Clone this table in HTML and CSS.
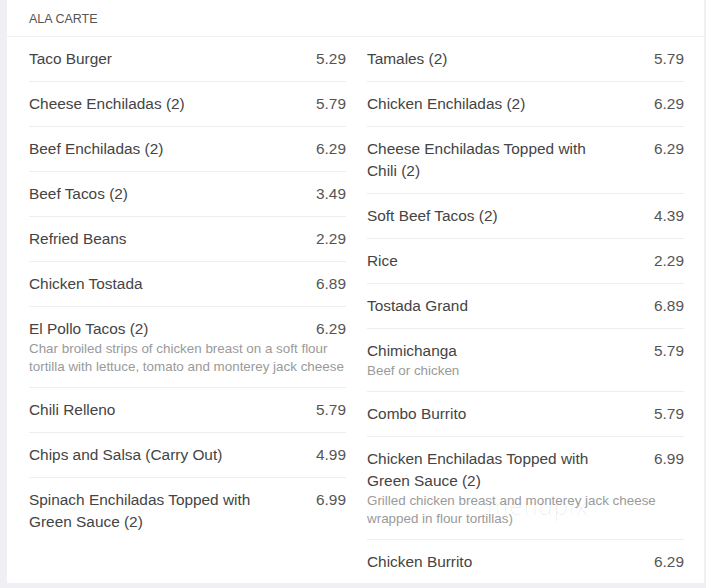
FILE: index.html
```html
<!DOCTYPE html>
<html>
<head>
<meta charset="utf-8">
<link rel="stylesheet" href="styles.css">
</head>
<body>
<div class="card">
  <div class="head">ALA CARTE</div>
  <div class="cols">
    <div class="col">
      <div class="item"><div class="row"><span class="name">Taco Burger</span><span class="price">5.29</span></div></div>
      <div class="item"><div class="row"><span class="name">Cheese Enchiladas (2)</span><span class="price">5.79</span></div></div>
      <div class="item"><div class="row"><span class="name">Beef Enchiladas (2)</span><span class="price">6.29</span></div></div>
      <div class="item"><div class="row"><span class="name">Beef Tacos (2)</span><span class="price">3.49</span></div></div>
      <div class="item"><div class="row"><span class="name">Refried Beans</span><span class="price">2.29</span></div></div>
      <div class="item"><div class="row"><span class="name">Chicken Tostada</span><span class="price">6.89</span></div></div>
      <div class="item"><div class="row"><span class="name">El Pollo Tacos (2)</span><span class="price">6.29</span></div><p class="desc">Char broiled strips of chicken breast on a soft flour tortilla with lettuce, tomato and monterey jack cheese</p></div>
      <div class="item"><div class="row"><span class="name">Chili Relleno</span><span class="price">5.79</span></div></div>
      <div class="item"><div class="row"><span class="name">Chips and Salsa (Carry Out)</span><span class="price">4.99</span></div></div>
      <div class="item last"><div class="row"><span class="name">Spinach Enchiladas Topped with Green Sauce (2)</span><span class="price">6.99</span></div></div>
    </div>
    <div class="col">
      <div class="item"><div class="row"><span class="name">Tamales (2)</span><span class="price">5.79</span></div></div>
      <div class="item"><div class="row"><span class="name">Chicken Enchiladas (2)</span><span class="price">6.29</span></div></div>
      <div class="item"><div class="row"><span class="name">Cheese Enchiladas Topped with Chili (2)</span><span class="price">6.29</span></div></div>
      <div class="item"><div class="row"><span class="name">Soft Beef Tacos (2)</span><span class="price">4.39</span></div></div>
      <div class="item"><div class="row"><span class="name">Rice</span><span class="price">2.29</span></div></div>
      <div class="item"><div class="row"><span class="name">Tostada Grand</span><span class="price">6.89</span></div></div>
      <div class="item"><div class="row"><span class="name">Chimichanga</span><span class="price">5.79</span></div><p class="desc">Beef or chicken</p></div>
      <div class="item"><div class="row"><span class="name">Combo Burrito</span><span class="price">5.79</span></div></div>
      <div class="item wm-host"><div class="row"><span class="name">Chicken Enchiladas Topped with Green Sauce (2)</span><span class="price">6.99</span></div><p class="desc">Grilled chicken breast and monterey jack cheese wrapped in flour tortillas)</p><span class="watermark">menupix</span></div>
      <div class="item last"><div class="row"><span class="name">Chicken Burrito</span><span class="price">6.29</span></div></div>
    </div>
  </div>
</div>
</body>
</html>
```
FILE: styles.css
```css
html, body {
  margin: 0;
  padding: 0;
  background: #efeff4;
}
body {
  width: 706px;
  height: 588px;
  overflow: hidden;
  font-family: "Liberation Sans", Arial, sans-serif;
}
.card {
  margin-left: 7px;
  width: 697px;
  height: 583px;
  background: #fff;
  box-sizing: border-box;
}
.head {
  height: 37px;
  box-sizing: border-box;
  padding: 12px 0 0 22px;
  font-size: 12.5px;
  line-height: 14px;
  color: #555;
  border-bottom: 1px solid #f0f0f3;
}
.cols {
  display: grid;
  grid-template-columns: 317px 317px;
  column-gap: 21px;
  padding: 0 20px 0 22px;
}
.item {
  padding: 11px 0;
  border-bottom: 1px solid #eeeef1;
}
.item.last {
  border-bottom: none;
}
.row {
  display: flex;
  justify-content: space-between;
  align-items: flex-start;
  font-size: 15.4px;
  line-height: 22px;
  color: #444;
}
.name {
  width: 75%;
}
.price {
  color: #555;
}
.desc {
  margin: 0;
  font-size: 13.4px;
  line-height: 18px;
  color: #9a9a9a;
}
.wm-host {
  position: relative;
}
.watermark {
  position: absolute;
  left: 120px;
  top: 52px;
  font-size: 24px;
  letter-spacing: 1px;
  color: rgba(0, 0, 0, 0.07);
  font-family: "Open Sans", sans-serif;
  font-weight: 300;
}
```
